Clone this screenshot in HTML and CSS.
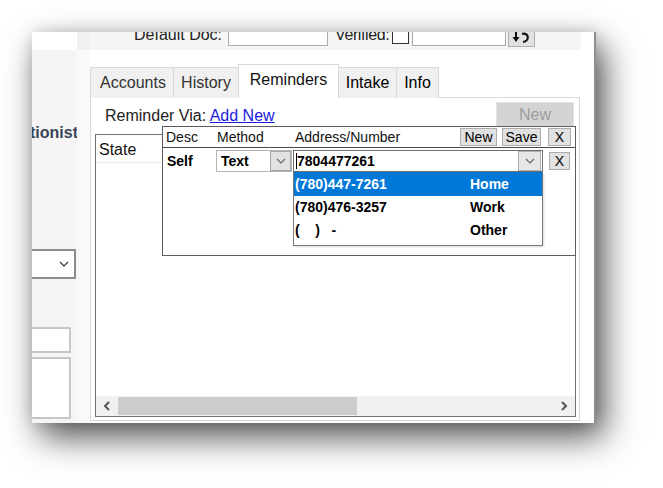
FILE: index.html
```html
<!DOCTYPE html>
<html>
<head>
<meta charset="utf-8">
<link rel="stylesheet" href="styles.css">
</head>
<body>
<div class="frame">
  <div class="leftcol">
    <div class="lp">
      <div class="lp-top"></div>
      <div class="lp-body">
        <div class="lp-label">Receptionist</div>
        <div class="lp-select">
          <svg width="10" height="6" viewBox="0 0 10 6"><path d="M1 1 L5 5 L9 1" fill="none" stroke="#444" stroke-width="1.3"/></svg>
        </div>
        <div class="lp-input"></div>
        <div class="lp-textarea"></div>
      </div>
    </div>
    <div class="gutter"><div class="gutter-top"></div></div>
  </div>

  <div class="main">
    <div class="topbar">
      <span class="tb-label">Default Doc:</span>
      <span class="tb-input tb-input1"></span>
      <span class="tb-label tb-label2">Verified:</span>
      <span class="tb-check"></span>
      <span class="tb-input tb-input2"></span>
      <span class="tb-btn">
        <svg width="22" height="18" viewBox="0 0 22 18"><path d="M5 2 V10" stroke="#111" stroke-width="2"/><path d="M1.5 9 L5 14 L8.5 9 Z" fill="#111"/><path d="M11 6 C18 4 19 13 12 14" fill="none" stroke="#111" stroke-width="2.2"/></svg>
      </span>
    </div>

    <div class="tabs">
      <div class="tab tab-accounts">Accounts</div>
      <div class="tab tab-history">History</div>
      <div class="tab tab-active tab-reminders">Reminders</div>
      <div class="tab tab-dark tab-intake">Intake</div>
      <div class="tab tab-dark tab-info">Info</div>
    </div>

    <div class="panel">
      <div class="via-row">
        <span class="via-label">Reminder Via: <a class="via-link" href="#">Add New</a></span>
        <span class="new-btn">New</span>
      </div>
      <div class="grid">
        <div class="grid-head">State</div>
        <div class="grid-body"></div>
        <div class="hscroll">
          <div class="hs-btn hs-left">
            <svg width="8" height="10" viewBox="0 0 8 10"><path d="M6 1 L2 5 L6 9" fill="none" stroke="#555" stroke-width="2"/></svg>
          </div>
          <div class="hs-thumb"></div>
          <div class="hs-track"></div>
          <div class="hs-btn hs-right">
            <svg width="8" height="10" viewBox="0 0 8 10"><path d="M2 1 L6 5 L2 9" fill="none" stroke="#555" stroke-width="2"/></svg>
          </div>
        </div>
      </div>

      <div class="popup">
        <div class="pop-head">
          <span class="ph-desc">Desc</span>
          <span class="ph-method">Method</span>
          <span class="ph-addr">Address/Number</span>
          <span class="pbtn pbtn-new">New</span>
          <span class="pbtn pbtn-save">Save</span>
          <span class="pbtn pbtn-x">X</span>
        </div>
        <div class="pop-row">
          <span class="pr-desc">Self</span>
          <span class="pr-select">
            <span class="pr-select-text">Text</span>
            <span class="dd-btn">
              <svg width="10" height="6" viewBox="0 0 10 6"><path d="M1 1 L5 5 L9 1" fill="none" stroke="#666" stroke-width="1.2"/></svg>
            </span>
          </span>
          <span class="pr-combo">
            <span class="caret"></span><span class="pr-combo-text">7804477261</span>
            <span class="dd-btn dd-btn-combo">
              <svg width="10" height="6" viewBox="0 0 10 6"><path d="M1 1 L5 5 L9 1" fill="none" stroke="#666" stroke-width="1.2"/></svg>
            </span>
          </span>
          <span class="pbtn pbtn-x2">X</span>
        </div>

        <div class="ddlist">
          <div class="dd-item dd-sel dd-h24"><span class="dd-num">(780)447-7261</span><span>Home</span></div>
          <div class="dd-item"><span class="dd-num">(780)476-3257</span><span>Work</span></div>
          <div class="dd-item"><span class="dd-num">(&nbsp;&nbsp;&nbsp;&nbsp;)&nbsp;&nbsp;&nbsp;-</span><span>Other</span></div>
        </div>
      </div>
    </div>
  </div>
</div>
</body>
</html>
```

FILE: styles.css
```css
* { box-sizing: border-box; }
html, body { margin: 0; padding: 0; background: #fff; }
body {
  font-family: "Liberation Sans", Arial, sans-serif;
  width: 663px;
  height: 488px;
  overflow: hidden;
}

.frame {
  margin: 32px 0 0 32px;
  width: 564px;
  height: 391px;
  display: flex;
  overflow: hidden;
  background: #fff;
  box-shadow: 8px 14px 32px rgba(0, 0, 0, 0.68), 0 0 14px rgba(0, 0, 0, 0.12);
}

/* left cut-off panel */
.leftcol { width: 58px; flex-shrink: 0; display: flex; }
.lp { width: 45px; display: flex; flex-direction: column; }
.lp-top { height: 18px; background: #fff; }
.lp-body {
  flex: 1;
  background: #f5f5f5;
  display: flex;
  flex-direction: column;
  align-items: flex-end;
}
.lp-label {
  margin-top: 74px;
  margin-right: -1px;
  font-size: 16px;
  line-height: 18px;
  font-weight: bold;
  color: #3a4459;
  white-space: nowrap;
}
.lp-select {
  margin-top: 107px;
  margin-right: 1px;
  width: 60px;
  height: 30px;
  background: #fff;
  border: 2px solid #8d8d8d;
  display: flex;
  align-items: center;
  justify-content: flex-end;
  padding-right: 5px;
}
.lp-input {
  margin-top: 48px;
  margin-right: 6px;
  width: 50px;
  height: 26px;
  background: #fff;
  border: 2px solid #c6c6c6;
}
.lp-textarea {
  margin-top: 4px;
  margin-right: 6px;
  width: 50px;
  height: 62px;
  background: #fff;
  border: 2px solid #c6c6c6;
}
.gutter { width: 13px; background: #f9f9f9; }
.gutter-top { height: 18px; background: #f0f0f0; }

/* main area */
.main {
  flex: 1;
  display: flex;
  flex-direction: column;
  border-right: 2px solid #8f8f8f;
  min-width: 0;
}

.topbar {
  margin-top: -10px;
  margin-right: 13px;
  height: 28px;
  flex-shrink: 0;
  background: #f5f5f5;
  display: flex;
  align-items: flex-start;
  padding-left: 44px;
}
.tb-label {
  margin-top: 4px;
  font-size: 16px;
  line-height: 18px;
  color: #222;
  white-space: nowrap;
}
.tb-input {
  margin-top: 2px;
  height: 22px;
  background: #fff;
  border: 1px solid #ababab;
}
.tb-input1 { margin-left: 6px; width: 100px; }
.tb-label2 { margin-left: 7px; width: 57px; letter-spacing: -0.4px; }
.tb-check {
  margin-top: 6px;
  width: 17px;
  height: 16px;
  background: #fff;
  border: 1px solid #333;
}
.tb-input2 { margin-left: 3px; width: 94px; }
.tb-btn {
  margin-left: 2px;
  margin-top: 4px;
  width: 27px;
  height: 21px;
  background: #e1e1e1;
  border: 1px solid #adadad;
  display: flex;
  align-items: center;
  justify-content: center;
}

/* tabs */
.tabs {
  margin-top: 14px;
  height: 34px;
  flex-shrink: 0;
  display: flex;
  align-items: flex-end;
  position: relative;
  z-index: 2;
}
.tab {
  height: 31px;
  background: #f0f0f0;
  border: 1px solid #d9d9d9;
  border-bottom: none;
  font-size: 16px;
  line-height: 18px;
  padding-top: 6px;
  text-align: center;
  color: #333;
  white-space: nowrap;
}
.tab + .tab { margin-left: -1px; }
.tab-accounts { width: 84px; padding-left: 2px; }
.tab-history { width: 66px; }
.tab-reminders { width: 101px; }
.tab-intake { width: 59px; }
.tab-info { width: 43px; }
.tab-dark { color: #000; }
.tab-active {
  height: 34px;
  background: #fff;
  padding-top: 6px;
  color: #111;
}

/* panel */
.panel {
  flex: 1;
  margin-top: -1px;
  margin-right: 14px;
  margin-bottom: 2px;
  border: 1px solid #d9d9d9;
  background: #fff;
  position: relative;
  padding: 0 2px 0 4px;
  display: flex;
  flex-direction: column;
}
.via-row {
  height: 30px;
  padding-top: 4px;
  margin-bottom: 6px;
  display: flex;
  align-items: flex-start;
  flex-shrink: 0;
}
.via-label {
  margin-left: 10px;
  margin-top: 5px;
  font-size: 16px;
  line-height: 18px;
  color: #222;
}
.via-link { color: #1a1ae0; text-decoration: underline; }
.new-btn {
  margin-left: auto;
  margin-right: 3px;
  width: 78px;
  height: 26px;
  background: #d4d4d4;
  border: 1px solid #e2e2e2;
  color: #9c9c9c;
  font-size: 16px;
  line-height: 24px;
  text-align: center;
}

.grid {
  height: 283px;
  margin-right: 1px;
  border: 1px solid #707070;
  display: flex;
  flex-direction: column;
  flex-shrink: 0;
}
.grid-head {
  height: 28px;
  border-bottom: 1px solid #ececec;
  padding: 6px 0 0 3px;
  font-size: 16px;
  line-height: 18px;
  color: #111;
}
.grid-body { flex: 1; }
.hscroll {
  height: 20px;
  background: #f0f0f0;
  display: flex;
}
.hs-btn {
  width: 22px;
  display: flex;
  align-items: center;
  justify-content: center;
}
.hs-thumb { width: 239px; background: #cdcdcd; margin: 1px 0; }
.hs-track { flex: 1; }

/* popup editor */
.popup {
  position: absolute;
  left: 71px;
  top: 28px;
  width: 414px;
  height: 130px;
  background: #fff;
  border: 1px solid #5c5c5c;
  z-index: 3;
  font-size: 14px;
  color: #000;
}
.pop-head {
  height: 21px;
  border-bottom: 1px solid #4a4a4a;
  display: flex;
  align-items: flex-start;
  line-height: 20px;
}
.ph-desc { padding-left: 3px; width: 54px; color: #111; }
.ph-method { width: 78px; color: #111; }
.ph-addr { flex: 1; color: #111; }
.pbtn {
  height: 18px;
  margin-top: 1px;
  background: #e1e1e1;
  border: 1px solid #adadad;
  line-height: 16px;
  text-align: center;
  font-size: 14px;
  color: #000;
}
.pbtn-new { width: 37px; }
.pbtn-save { width: 39px; margin-left: 5px; }
.pbtn-x { width: 23px; margin-left: 7px; margin-right: 4px; }

.pop-row {
  height: 26px;
  padding-top: 2px;
  display: flex;
  align-items: flex-start;
  font-weight: bold;
}
.pr-desc { width: 53px; padding-left: 4px; line-height: 22px; }
.pr-select {
  width: 76px;
  height: 22px;
  border: 1px solid #b4b4b4;
  display: flex;
  background: #fff;
}
.pr-select-text { flex: 1; padding-left: 4px; line-height: 20px; }
.dd-btn {
  width: 21px;
  height: 20px;
  background: #e2e2e2;
  border: 1px solid #a9a9a9;
  display: flex;
  align-items: center;
  justify-content: center;
}
.pr-combo {
  margin-left: 1px;
  width: 250px;
  height: 22px;
  border: 1px solid #6e6e6e;
  display: flex;
  align-items: flex-start;
}
.caret {
  margin-left: 2px;
  margin-top: 2px;
  width: 1px;
  height: 16px;
  background: #000;
}
.pr-combo-text { flex: 1; line-height: 20px; }
.dd-btn-combo { width: 23px; margin-right: 1px; background: #e6e6e6; border-color: #b0b0b0; }
.pbtn-x2 { width: 21px; margin-left: 6px; margin-top: 2px; font-weight: normal; }

.ddlist {
  position: absolute;
  left: 130px;
  top: 45px;
  width: 250px;
  height: 74px;
  border: 1px solid #7a7a7a;
  border-top: none;
  background: #fff;
  font-weight: bold;
  box-shadow: 1px 1px 2px rgba(0,0,0,0.15);
}
.dd-item {
  height: 23px;
  line-height: 23px;
  display: flex;
  padding-left: 1px;
  white-space: nowrap;
}
.dd-h24 { height: 24px; line-height: 24px; }
.dd-num { width: 175px; }
.dd-sel { background: #0078d7; color: #fff; }
```
